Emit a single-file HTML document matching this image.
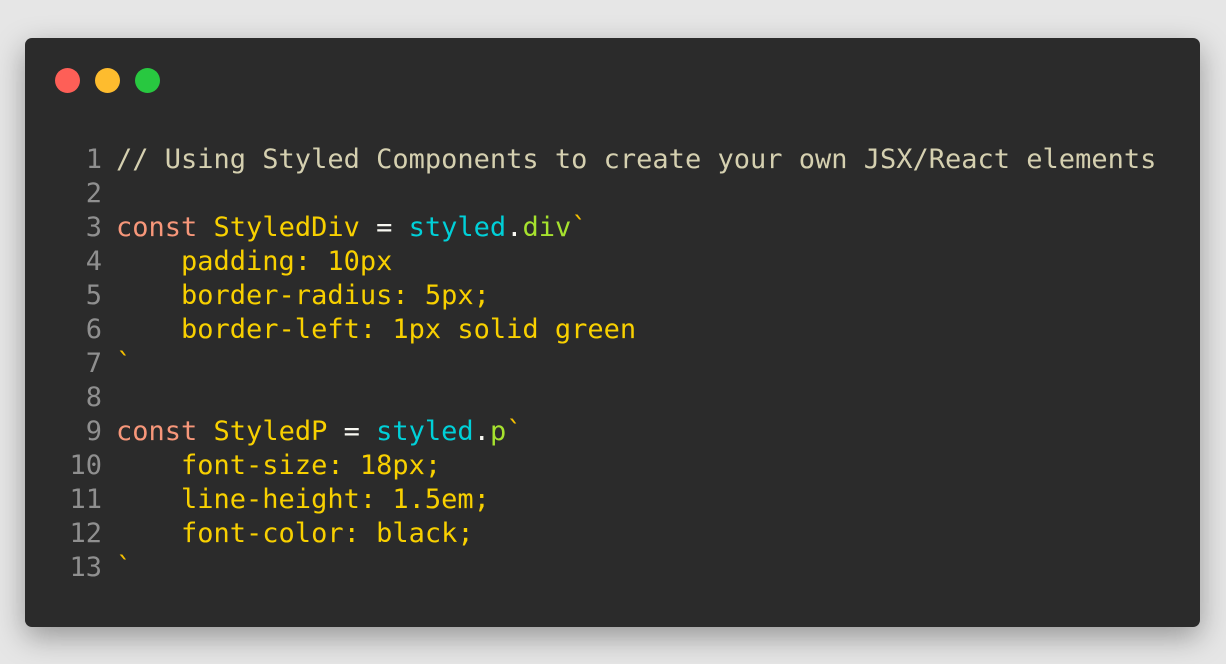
<html><head><style>
body{margin:0;width:1226px;height:664px;background:#e6e6e6;overflow:hidden;position:relative}
.win{position:absolute;left:25px;top:38px;width:1175px;height:589px;background:#2b2b2b;border-radius:7px;box-shadow:0 10px 30px rgba(0,0,0,.35)}
.dot{position:absolute;top:30px;width:25px;height:25px;border-radius:50%}
pre{position:absolute;left:0;top:105px;margin:0;font-family:"DejaVu Sans Mono","Liberation Mono",monospace;font-size:27px;line-height:34px;color:#f8f8f2}
.n{display:inline-block;width:77px;text-align:right;color:#8f8f8f;margin-right:14px}
.c{color:#d5d0b0}.k{color:#f7977a}.y{color:#f8d000}.s{color:#00d0d8}.g{color:#a6e22e}.b{color:#f5c000}
</style></head><body><div class="win">
<div class="dot" style="left:30px;background:#fe5f57"></div>
<div class="dot" style="left:70px;background:#febc2e"></div>
<div class="dot" style="left:110px;background:#28c840"></div>
<pre><span class="n">1</span><span class="c">// Using Styled Components to create your own JSX/React elements</span>
<span class="n">2</span>
<span class="n">3</span><span class="k">const</span> <span class="y">StyledDiv</span> = <span class="s">styled</span>.<span class="g">div</span><span class="b">`</span>
<span class="n">4</span><span class="y">    padding: 10px</span>
<span class="n">5</span><span class="y">    border-radius: 5px;</span>
<span class="n">6</span><span class="y">    border-left: 1px solid green</span>
<span class="n">7</span><span class="b">`</span>
<span class="n">8</span>
<span class="n">9</span><span class="k">const</span> <span class="y">StyledP</span> = <span class="s">styled</span>.<span class="g">p</span><span class="b">`</span>
<span class="n">10</span><span class="y">    font-size: 18px;</span>
<span class="n">11</span><span class="y">    line-height: 1.5em;</span>
<span class="n">12</span><span class="y">    font-color: black;</span>
<span class="n">13</span><span class="b">`</span></pre>
</div></body></html>
